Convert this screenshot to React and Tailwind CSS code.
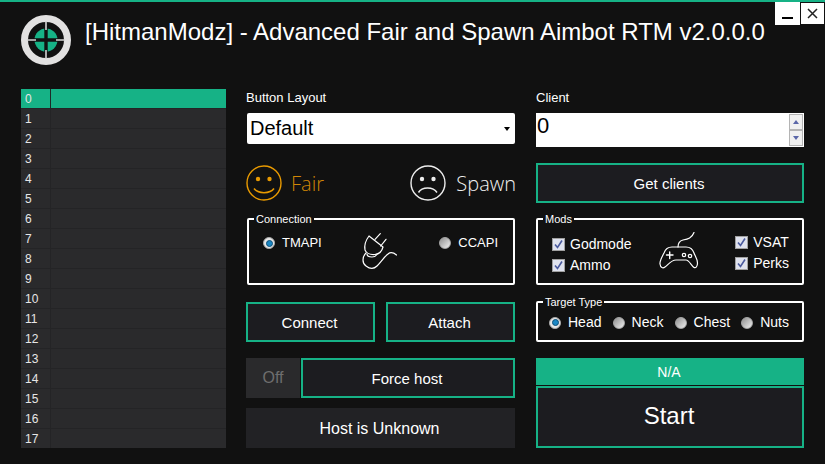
import React from "react";

const Logo = () => (
  <svg width="50" height="50" viewBox="0 0 50 50" className="shrink-0">
    <circle cx="25" cy="25" r="21.5" fill="none" stroke="#e2e1e1" strokeWidth="7" />
    <circle cx="25" cy="25" r="11.5" fill="#16b286" />
    <path d="M25 8V42M8 25H42" stroke="#111" strokeWidth="3.4" />
    <path d="M25 6V15M25 35V44M6 25H15M35 25H44" stroke="#d4d4d4" strokeWidth="1.6" />
  </svg>
);

const Face = ({ color, sad }) => (
  <svg width="36" height="36" viewBox="0 0 36 36" className="shrink-0">
    <circle cx="18" cy="18" r="17" fill="none" stroke={color} strokeWidth="1.4" />
    <circle cx="12" cy="14" r="2.2" fill={color} />
    <circle cx="23.5" cy="14" r="2.2" fill={color} />
    {sad ? (
      <path d="M8.5 27.5C12 21.5 23 21.5 27 27.5" fill="none" stroke={color} strokeWidth="1.5" />
    ) : (
      <path d="M8 23.5C12 29 24 29 28 23.5" fill="none" stroke={color} strokeWidth="1.5" />
    )}
  </svg>
);

const Plug = () => (
  <svg width="36" height="36" viewBox="0 0 36 36" fill="none" stroke="#fff" strokeWidth="1.2" strokeLinecap="round" strokeLinejoin="round" className="shrink-0">
    <path d="M7 3L21 14C20 18 17 21 13 21.5C8 22 4 20 3 17C2 12 4 7 7 3Z" />
    <path d="M13 6.3L18.3 0.7M18.7 13L24 6.3" />
    <path d="M4 20C0 24 0 30 4 33C8 36 12 36 15 33C19 29 22 24 26 21C29 18.5 32 20 34.5 22" />
    <path d="M5 21C5 23 7 24 10 24C12 24 14 23 15 21.5" />
  </svg>
);

const Pad = () => (
  <svg width="40" height="38" viewBox="0 0 40 38" fill="none" stroke="#fff" strokeWidth="1.2" strokeLinecap="round" strokeLinejoin="round" className="shrink-0">
    <path d="M13 15C8 15 6 18 5 21C3 25 0.5 29 1 32C1.5 36 4 36.5 6 35C9 33 12 28 17 28H27C30 28 32 33 35 35.5C37 36.5 38.5 34 38.5 31C38.5 27 36 24 35 21C34 18 32 15 27 15Z" />
    <path d="M19 15C19 11 20 9 24 8C29 7 33 6 35 0.5" />
    <path d="M7.5 23H14M10.7 20V26.5" strokeWidth="1.4" />
    <circle cx="25" cy="23" r="1.7" />
    <circle cx="31" cy="24" r="1.7" />
  </svg>
);

const Radio = ({ on }) => (
  <span
    className={`inline-flex h-[12px] w-[12px] shrink-0 items-center justify-center rounded-full border border-[#a8a8a8] ${
      on ? "bg-[#e8e8e8]" : "bg-[linear-gradient(135deg,#8f8f8f,#f0f0f0)]"
    }`}
  >
    {on && <span className="block h-[7px] w-[7px] rounded-full border border-[#0d4f78] bg-[#1b87c4]" />}
  </span>
);

const Check = () => (
  <span className="inline-flex h-[13px] w-[13px] shrink-0 items-center justify-center border border-[#a0a0a0] bg-[#dfe2ee]">
    <svg width="9" height="9" viewBox="0 0 9 9" fill="none">
      <path d="M1 4.5L3.5 7.5L8 0.5" stroke="#4a5a9e" strokeWidth="1.6" />
    </svg>
  </span>
);

const CheckRow = ({ label }) => (
  <div className="flex h-[21px] items-center gap-[5px] text-[14px] text-white">
    <Check />
    <span>{label}</span>
  </div>
);

const GreenButton = ({ className, children }) => (
  <button className={`flex h-10 items-center justify-center border-2 border-[#16b286] bg-[#1c1c20] pr-[2px] pt-[2px] text-[15px] text-white ${className}`}>
    {children}
  </button>
);

const Group = ({ title, className, children }) => (
  <fieldset className={`m-0 min-w-0 rounded-[2px] border-2 border-white px-0 pb-0 pt-0 ${className}`}>
    <legend className="ml-[5px] px-[2px] text-[11px] leading-[12px] text-white">{title}</legend>
    {children}
  </fieldset>
);

const Row = ({ n, active, last }) => (
  <div className={`flex text-[12px] leading-none ${last ? "h-[19px]" : "h-5 border-b border-[#242426]"} ${active ? "border-[#242426] bg-[#16b286]" : "bg-[#2a2a2c]"}`}>
    <div className={`flex w-[30px] items-center border-r pl-[4px] text-[#e6e6e6] ${active ? "border-[#1f2a28]" : "border-[#242426]"}`}>
      {n}
    </div>
    <div className="flex-1" />
  </div>
);

export default function App() {
  return (
    <div
      className="flex h-[464px] w-[825px] flex-col overflow-hidden border-t-2 border-[#16b286] bg-[#111111] text-white"
      style={{ fontFamily: '"Liberation Sans", Arial, sans-serif' }}
    >
      <header className="flex h-[87px] shrink-0 items-start pl-[21px]">
        <div className="mt-[13px] flex items-center gap-[14px]">
          <Logo />
          <h1 className="m-0 -mt-[17px] whitespace-nowrap text-[24px] font-normal leading-[30px] text-white">
            [HitmanModz] - Advanced Fair and Spawn Aimbot RTM v2.0.0.0
          </h1>
        </div>
        <div className="ml-auto flex items-start">
          <button className="relative flex h-[23px] w-[25px] items-end justify-center bg-white pb-[6px]">
            <span className="block h-[2px] w-[11px] bg-black" />
          </button>
          <button className="flex h-[23px] w-[25px] items-center justify-center border border-[#111] bg-white">
            <svg width="11" height="11" viewBox="0 0 11 11" fill="none">
              <path d="M1 1L10 10M10 1L1 10" stroke="#222" strokeWidth="1.5" />
            </svg>
          </button>
        </div>
      </header>

      <main className="flex items-start pl-[21px]">
        <section className="w-[205px] shrink-0">
          {Array.from({ length: 18 }, (_, i) => (
            <Row key={i} n={i} active={i === 0} last={i === 17} />
          ))}
        </section>

        <section className="ml-5 flex w-[269px] shrink-0 flex-col">
          <label className="h-[24px] pt-[1px] text-[13px] leading-[15px] text-white">Button Layout</label>
          <div className="ml-[1px] flex h-[31px] w-[268px] items-center justify-between rounded-[2px] bg-white pb-[2px] pl-[3px] pr-[5px] text-[20px] text-black">
            <span>Default</span>
            <span className="mt-[2px] h-0 w-0 border-x-[3.5px] border-t-[4px] border-x-transparent border-t-black" />
          </div>

          <div className="mt-[21px] flex h-[36px] items-center">
            <Face color="#e99a00" />
            <span className="ml-[9px] pt-[2px] text-[20px] font-light text-[#d08605]" style={{ fontFamily: '"Open Sans", sans-serif' }}>Fair</span>
            <span className="-mr-[1px] ml-auto flex items-center">
              <Face color="#ededed" sad />
              <span className="ml-[10px] pt-[2px] text-[20px] font-light text-[#f0f0f0]" style={{ fontFamily: '"Open Sans", sans-serif' }}>Spawn</span>
            </span>
          </div>

          <Group title="Connection" className="mt-[12px] ml-[1px] h-[72px] w-[268px]">
            <div className="flex items-start pl-[14px] pr-[15px] pt-[11px] text-[13px]">
              <div className="flex h-[14px] items-center gap-[7px]">
                <Radio on />
                <span>TMAPI</span>
              </div>
              <div className="-mt-[3px] ml-[40px]"><Plug /></div>
              <div className="ml-auto flex h-[14px] items-center gap-[7px]">
                <Radio />
                <span>CCAPI</span>
              </div>
            </div>
          </Group>

          <div className="mt-[17px] flex justify-between">
            <GreenButton className="w-[129px]">Connect</GreenButton>
            <GreenButton className="w-[129px]">Attach</GreenButton>
          </div>

          <div className="mt-4 flex gap-[1px]">
            <div className="flex h-10 w-[54px] items-center justify-center bg-[#2a2a2c] text-[16px] text-[#6e6e6e]">Off</div>
            <GreenButton className="flex-1">Force host</GreenButton>
          </div>

          <div className="mt-[10px] flex h-10 items-center justify-center bg-[#222225] pr-[2px] pt-[2px] text-[16px] text-white">
            Host is Unknown
          </div>
        </section>

        <section className="ml-[21px] flex w-[268px] shrink-0 flex-col">
          <label className="h-[24px] pt-[1px] text-[13px] leading-[15px] text-white">Client</label>
          <div className="flex h-[34px] items-stretch bg-white pl-[1px] pr-[1px] pt-[1px] text-black">
            <span className="flex-1 text-[22px] leading-[24px]">0</span>
            <div className="flex w-[14px] flex-col">
              <span className="flex h-[16px] items-center justify-center border border-[#b4b4b4] bg-[#f0f0f0]">
                <span className="h-0 w-0 border-x-[3.5px] border-b-[4px] border-x-transparent border-b-[#5a66a8]" />
              </span>
              <span className="flex h-[16px] items-center justify-center border border-[#b4b4b4] bg-[#f0f0f0]">
                <span className="h-0 w-0 border-x-[3.5px] border-t-[4px] border-x-transparent border-t-[#5a66a8]" />
              </span>
            </div>
          </div>

          <GreenButton className="mt-4 w-full">Get clients</GreenButton>

          <Group title="Mods" className="mt-[10px] h-[72px] w-full">
            <div className="flex pl-[14px] pr-[13px] pt-[9px]">
              <div className="flex flex-col">
                <CheckRow label="Godmode" />
                <CheckRow label="Ammo" />
              </div>
              <div className="-mt-[2px] ml-[28px]"><Pad /></div>
              <div className="-mt-[2px] ml-auto flex flex-col">
                <CheckRow label="VSAT" />
                <CheckRow label="Perks" />
              </div>
            </div>
          </Group>

          <Group title="Target Type" className="mt-[11px] h-[46px] w-full">
            <div className="flex h-[19px] items-center justify-between pl-[11px] pr-[13px] pt-[10px] text-[14px]">
              <span className="flex items-center gap-[7px]"><Radio on />Head</span>
              <span className="flex items-center gap-[7px]"><Radio />Neck</span>
              <span className="flex items-center gap-[7px]"><Radio />Chest</span>
              <span className="flex items-center gap-[7px]"><Radio />Nuts</span>
            </div>
          </Group>

          <div className="mt-4 flex h-[27px] items-center justify-center bg-[#16b286] pr-[2px] pt-[2px] text-[14px] text-white">N/A</div>
          <button className="mt-[1px] flex h-[62px] items-center justify-center border-2 border-[#16b286] bg-[#1c1c20] pb-[2px] pr-[2px] text-[24px] text-white">Start</button>
        </section>
      </main>
    </div>
  );
}
